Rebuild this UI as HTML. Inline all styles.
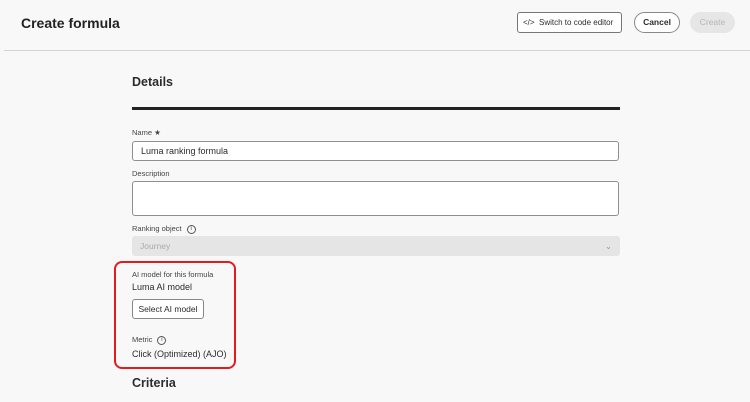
<!DOCTYPE html>
<html><head><style>
*{box-sizing:border-box;margin:0;padding:0}
body{width:750px;height:402px;background:#f8f8f8;font-family:"Liberation Sans",sans-serif;color:#2c2c2c;position:relative;overflow:hidden}
.a{position:absolute}
.lbl{font-size:7.5px;color:#444}
.inp{position:absolute;left:132px;width:487px;background:#fff;border:1px solid #8f8f8f;border-radius:3px}
.info{display:inline-block;width:9px;height:9px;border:1px solid #555;border-radius:50%;font-size:6px;text-align:center;line-height:7px;vertical-align:middle;margin-left:5px}
</style></head><body>
<div class="a" style="left:21px;top:15px;font-size:14px;font-weight:bold;color:#222">Create formula</div>
<div class="a" style="left:517px;top:12px;width:105px;height:21px;border:1px solid #777;border-radius:3px;background:#fff;font-size:8px;line-height:19px;padding-left:5px;white-space:nowrap">&lt;/&gt;&nbsp; Switch to code editor</div>
<div class="a" style="left:634px;top:12px;width:46px;height:21px;border:1px solid #888;border-radius:11px;background:#fff;font-size:8.5px;font-weight:bold;line-height:19px;text-align:center">Cancel</div>
<div class="a" style="left:690px;top:12px;width:45px;height:21px;border-radius:11px;background:#e6e6e6;color:#b5b5b5;font-size:8.5px;line-height:21px;text-align:center">Create</div>
<div class="a" style="left:4px;top:50px;width:746px;height:1px;background:#d3d3d3"></div>
<div class="a" style="left:132px;top:75px;font-size:12.5px;font-weight:bold">Details</div>
<div class="a" style="left:132px;top:107px;width:488px;height:3px;background:#222"></div>
<div class="a lbl" style="left:132px;top:128px">Name ★</div>
<div class="inp" style="top:141px;height:20px;font-size:9px;line-height:18px;padding-left:8px">Luma ranking formula</div>
<div class="a lbl" style="left:132px;top:169px">Description</div>
<div class="inp" style="top:181px;height:35px"></div>
<div class="a lbl" style="left:132px;top:224px">Ranking object<span class="info">i</span></div>
<div class="a" style="left:132px;top:236px;width:488px;height:20px;background:#e5e5e5;border-radius:3px;font-size:8.5px;color:#aaa;line-height:20px;padding-left:8px">Journey<span style="position:absolute;right:8px;color:#999">⌄</span></div>
<div class="a" style="left:114px;top:261px;width:122px;height:108px;border:2px solid #e21c1c;border-radius:8px"></div>
<div class="a lbl" style="left:132px;top:270px">AI model for this formula</div>
<div class="a" style="left:132px;top:282px;font-size:9px">Luma AI model</div>
<div class="a" style="left:132px;top:299px;width:72px;height:20px;border:1px solid #888;border-radius:3px;background:#fff;font-size:8.5px;line-height:18px;text-align:center">Select AI model</div>
<div class="a lbl" style="left:132px;top:335px">Metric<span class="info">i</span></div>
<div class="a" style="left:132px;top:349px;font-size:9px">Click (Optimized) (AJO)</div>
<div class="a" style="left:132px;top:376px;font-size:12.5px;font-weight:bold">Criteria</div>
</body></html>
